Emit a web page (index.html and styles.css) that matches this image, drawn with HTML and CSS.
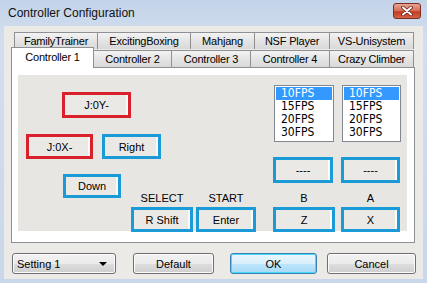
FILE: index.html
```html
<!DOCTYPE html>
<html lang="en">
<head>
    <meta charset="UTF-8">
    <title>Controller Configuration</title>
    <link rel="stylesheet" href="styles.css">
</head>
<body>
    <div class="window">
        <div class="titlebar">
            <span class="title">Controller Configuration</span>
            <div class="close">
                <svg width="14" height="10" viewBox="0 0 14 10">
                    <path d="M3 1.5 L11 8.5 M11 1.5 L3 8.5" stroke="#6b1e12" stroke-width="3.6" stroke-linecap="round"/>
                    <path d="M3 1.5 L11 8.5 M11 1.5 L3 8.5" stroke="#fff" stroke-width="2" stroke-linecap="round"/>
                </svg>
            </div>
        </div>

        <div class="client">
            <div class="tabrow back">
                <div class="tab w84">FamilyTrainer</div>
                <div class="tab w94">ExcitingBoxing</div>
                <div class="tab w65">Mahjang</div>
                <div class="tab w76">NSF Player</div>
                <div class="tab w85">VS-Unisystem</div>
            </div>
            <div class="tabrow front">
                <div class="tab w83 active">Controller 1</div>
                <div class="tab w79">Controller 2</div>
                <div class="tab w80">Controller 3</div>
                <div class="tab w80">Controller 4</div>
                <div class="tab w85">Crazy Climber</div>
            </div>

            <div class="panel">
                <div class="inner">
                    <div class="pad">
                        <div class="row row1">
                            <div class="key red up">J:0Y-</div>
                        </div>
                        <div class="row row2">
                            <div class="key red left">J:0X-</div>
                            <div class="key blue right">Right</div>
                        </div>
                        <div class="row row3">
                            <div class="key blue down">Down</div>
                            <div class="group select">
                                <div class="label">SELECT</div>
                                <div class="key blue">R Shift</div>
                            </div>
                            <div class="group start">
                                <div class="label">START</div>
                                <div class="key blue">Enter</div>
                            </div>
                        </div>
                    </div>

                    <div class="side">
                        <div class="row lists">
                            <div class="listbox c1">
                                <div class="item selected">10FPS</div>
                                <div class="item">15FPS</div>
                                <div class="item">20FPS</div>
                                <div class="item">30FPS</div>
                            </div>
                            <div class="listbox c2">
                                <div class="item selected">10FPS</div>
                                <div class="item">15FPS</div>
                                <div class="item">20FPS</div>
                                <div class="item">30FPS</div>
                            </div>
                        </div>
                        <div class="row turbo">
                            <div class="key blue c1">----</div>
                            <div class="key blue c2">----</div>
                        </div>
                        <div class="row ab">
                            <div class="group c1">
                                <div class="label">B</div>
                                <div class="key blue">Z</div>
                            </div>
                            <div class="group c2">
                                <div class="label">A</div>
                                <div class="key blue">X</div>
                            </div>
                        </div>
                    </div>
                </div>
            </div>

            <div class="footer">
                <div class="btn combo">
                    <span>Setting 1</span>
                    <svg width="8" height="4" viewBox="0 0 8 4"><path d="M0 0 H8 L4 4 Z" fill="#000"/></svg>
                </div>
                <div class="btn default">Default</div>
                <div class="btn ok">OK</div>
                <div class="btn cancel">Cancel</div>
            </div>
        </div>
    </div>
</body>
</html>
```

FILE: styles.css
```css
body {
    margin: 0;
    font-family: "Liberation Sans", Arial, sans-serif;
    font-size: 11px;
    color: #000;
}

.window {
    width: 427px;
    height: 283px;
    box-sizing: border-box;
    padding: 0 4px 4px;
    display: flex;
    flex-direction: column;
    background: linear-gradient(#c3d3e8, #d3dff0 40px, #c8d7ea);
}

.titlebar {
    height: 26px;
    display: flex;
    align-items: center;
    justify-content: space-between;
    padding-left: 4px;
}

.title {
    font-size: 12px;
    color: #111;
}

.close {
    width: 28px;
    height: 16px;
    box-sizing: border-box;
    margin-right: 2px;
    margin-top: -4px;
    border: 1px solid #7a2c22;
    border-radius: 3px;
    background: linear-gradient(#e9a594, #d66a52 50%, #c23a20 55%, #d4644a);
    display: flex;
    align-items: center;
    justify-content: center;
}

.client {
    flex: 1;
    background: #eceae7;
    padding: 6px 0 0 7px;
}

/* tabs */
.tabrow {
    display: flex;
}

.tabrow.back {
    margin-left: 3px;
    height: 17px;
}

.tabrow.front {
    height: 18px;
}

.tab {
    box-sizing: border-box;
    height: 17px;
    border: 1px solid #8e9092;
    border-bottom: none;
    background: linear-gradient(#f3f3f3, #e4e4e4 50%, #d9d9d9);
    display: flex;
    align-items: center;
    justify-content: center;
    letter-spacing: -0.2px;
}

.tab + .tab {
    margin-left: -1px;
}

.front .tab {
    margin-top: 1px;
}

.front .tab.active {
    position: relative;
    z-index: 1;
    margin-top: -2px;
    height: 21px;
    background: #fff;
    align-items: flex-start;
    padding-top: 3px;
}

.w83 { width: 83px; }
.w84 { width: 84px; }
.w94 { width: 94px; }
.w65 { width: 65px; }
.w76 { width: 76px; }
.w79 { width: 79px; }
.w80 { width: 80px; }
.w85 { width: 85px; }

/* panel */
.panel {
    width: 404px;
    height: 176px;
    box-sizing: border-box;
    border: 1px solid #8e9092;
    background: #fff;
    padding: 7px 7px 11px 6px;
}

.inner {
    height: 100%;
    background: #e8e6e3;
    display: flex;
}

.pad {
    width: 255px;
    display: flex;
    flex-direction: column;
}

.side {
    display: flex;
    flex-direction: column;
}

.row {
    display: flex;
    align-items: flex-start;
}

.key {
    box-sizing: border-box;
    height: 25px;
    border: 3px solid #1a9bd7;
    background: #ebe9e6;
    box-shadow: inset -2px 0 0 #fbfbfb;
    display: flex;
    align-items: center;
    justify-content: center;
}

.key.red {
    border-color: #d9202b;
}

.row1 { margin-top: 17px; }
.up { margin-left: 44px; width: 69px; height: 26px; }

.row2 { margin-top: 16px; gap: 9px; }
.left { margin-left: 8px; width: 67px; }
.right { width: 59px; }

.row3 { margin-top: 15px; }
.down { margin-left: 45px; width: 58px; height: 24px; }

.group {
    margin-top: 17px;
    display: flex;
    flex-direction: column;
}

.label {
    height: 14px;
    line-height: 14px;
    text-align: center;
    margin-bottom: 2px;
}

.select { margin-left: 10px; width: 62px; }
.start { margin-left: 3px; width: 60px; }

/* right side */
.lists { margin-top: 10px; gap: 8px; }

.listbox {
    box-sizing: border-box;
    height: 57px;
    border: 1px solid #82868e;
    background: #fff;
    padding: 1px;
    font-family: "Liberation Sans Narrow", "DejaVu Sans Condensed", "Liberation Sans", sans-serif;
    font-size: 12px;
}

.lists .c1 { margin-left: 1px; width: 60px; }
.lists .c2 { width: 59px; }

.item {
    height: 13px;
    line-height: 13px;
    padding-left: 5px;
}

.item.selected {
    background: #3399ff;
    color: #fff;
}

.turbo { margin-top: 15px; gap: 8px; }
.turbo .key { height: 26px; }
.turbo .c1 { width: 60px; }
.turbo .c2 { width: 59px; }

.ab { gap: 6px; }
.ab .group { margin-top: 8px; }
.ab .c1 { width: 62px; }
.ab .c2 { width: 59px; }

/* footer */
.footer {
    display: flex;
    margin-top: 10px;
}

.btn {
    box-sizing: border-box;
    height: 21px;
    border: 1px solid #707070;
    border-radius: 3px;
    background: linear-gradient(#f2f2f2, #ebebeb 50%, #dddddd 52%, #cfcfcf);
    box-shadow: inset 0 0 0 1px #fcfcfc;
    display: flex;
    align-items: center;
    justify-content: center;
}

.combo {
    margin-left: 1px;
    width: 104px;
    justify-content: space-between;
    padding: 0 8px 0 4px;
}

.default { margin-left: 17px; width: 81px; }

.ok {
    margin-left: 16px;
    width: 87px;
    border-color: #3c7fb1;
    background: linear-gradient(#eaf6fd, #d9f0fc 50%, #bee6fd 52%, #a7d9f5);
    box-shadow: inset 0 0 0 1px #48d8fb;
}

.cancel { margin-left: 10px; width: 89px; }
```
